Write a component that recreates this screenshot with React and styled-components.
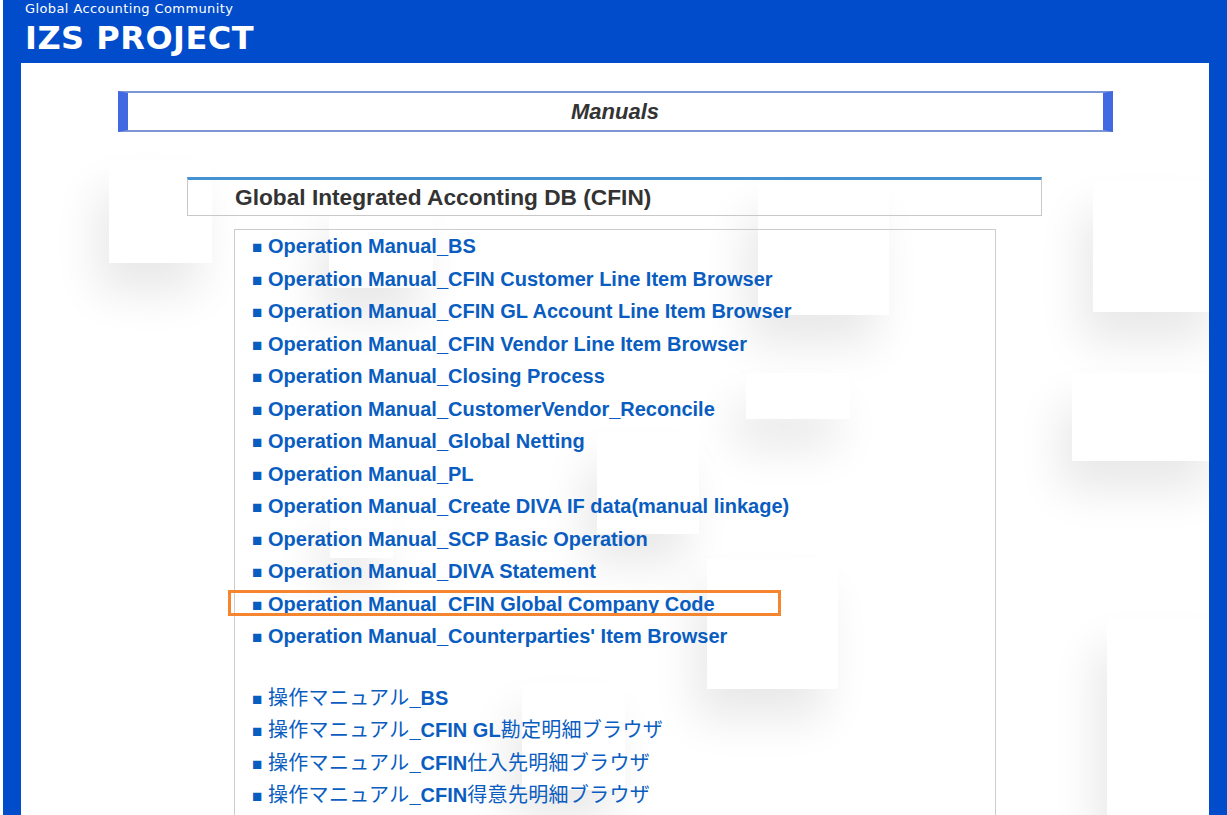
import React from 'react'
import styled, { createGlobalStyle } from 'styled-components'

const GlobalStyle = createGlobalStyle`
  html, body {
    margin: 0;
    padding: 0;
    overflow: hidden;
    background: #ffffff;
  }
  body {
    font-family: "Liberation Sans", Arial, sans-serif;
  }
`

// decorative white tiles with soft shadows behind the content (page coords)
const tiles = [
  [109, 160, 103, 103],
  [329, 203, 104, 85],
  [758, 183, 131, 132],
  [1093, 181, 130, 131],
  [746, 373, 104, 46],
  [1072, 373, 150, 88],
  [597, 433, 102, 101],
  [330, 507, 63, 51],
  [707, 559, 131, 130],
  [1107, 618, 120, 200],
  [522, 683, 103, 107],
]

const manuals = [
  'Operation Manual_BS',
  'Operation Manual_CFIN Customer Line Item Browser',
  'Operation Manual_CFIN GL Account Line Item Browser',
  'Operation Manual_CFIN Vendor Line Item Browser',
  'Operation Manual_Closing Process',
  'Operation Manual_CustomerVendor_Reconcile',
  'Operation Manual_Global Netting',
  'Operation Manual_PL',
  'Operation Manual_Create DIVA IF data(manual linkage)',
  'Operation Manual_SCP Basic Operation',
  'Operation Manual_DIVA Statement',
  'Operation Manual_CFIN Global Company Code',
  "Operation Manual_Counterparties' Item Browser",
]

const manualsJp = [
  '操作マニュアル_BS',
  '操作マニュアル_CFIN GL勘定明細ブラウザ',
  '操作マニュアル_CFIN仕入先明細ブラウザ',
  '操作マニュアル_CFIN得意先明細ブラウザ',
]

const CJK = /([\u3000-\u30ff\u4e00-\u9fff]+)/

function splitCjk(text) {
  return text.split(CJK).filter(Boolean).map((part, i) =>
    CJK.test(part) ? <Cjk key={i}>{part}</Cjk> : <span key={i}>{part}</span>
  )
}

function App() {
  return (
    <>
      <GlobalStyle />
      <Frame>
        <Header>
          <Tagline>Global Accounting Community</Tagline>
          <Brand>IZS PROJECT</Brand>
        </Header>
        <Content>
          <Backdrop>
            {tiles.map(([x, y, w, h], i) => (
              <Tile key={i} $x={x - 21} $y={y - 63} $w={w} $h={h} />
            ))}
          </Backdrop>
          <PageTitle>Manuals</PageTitle>
          <Section>
            <SectionTitle>Global Integrated Acconting DB (CFIN)</SectionTitle>
            <LinkList>
              {manuals.map((m, i) => (
                <LinkItem key={m} $highlight={i === 11}>
                  <Bullet>■</Bullet>
                  <a href="#">{m}</a>
                </LinkItem>
              ))}
              <Spacer />
              {manualsJp.map((m) => (
                <LinkItem key={m}>
                  <Bullet>■</Bullet>
                  <a href="#">{splitCjk(m)}</a>
                </LinkItem>
              ))}
            </LinkList>
          </Section>
        </Content>
      </Frame>
    </>
  )
}

const Frame = styled.div`
  margin-left: 3px;
  min-height: 100vh;
  padding: 0 18px;
  background: #004cca;
  display: flex;
  flex-direction: column;
`

const Header = styled.header`
  height: 63px;
  padding: 0 4px;
  box-sizing: border-box;
  color: #ffffff;
  font-family: "DejaVu Sans", Verdana, sans-serif;
`

const Tagline = styled.div`
  font-size: 13px;
  line-height: 18px;
  letter-spacing: 0.4px;
`

const Brand = styled.h1`
  margin: 0;
  font-size: 32px;
  line-height: 40px;
  font-weight: bold;
  letter-spacing: 0.5px;
`

const Content = styled.main`
  flex: 1;
  position: relative;
  overflow: hidden;
  background: #ffffff;
  padding-bottom: 300px;
`

const Backdrop = styled.div`
  position: absolute;
  inset: 0;
  z-index: 0;
  pointer-events: none;
`

const Tile = styled.div`
  position: absolute;
  left: ${(p) => p.$x}px;
  top: ${(p) => p.$y}px;
  width: ${(p) => p.$w}px;
  height: ${(p) => p.$h}px;
  background: #ffffff;
  box-shadow: -12px 30px 45px rgba(0, 0, 0, 0.09);
`

const PageTitle = styled.h2`
  position: relative;
  z-index: 1;
  box-sizing: border-box;
  width: 995px;
  height: 41px;
  margin: 28px auto 0;
  background: #ffffff;
  border-top: 2px solid #7d97d6;
  border-bottom: 2px solid #7d97d6;
  border-left: 10px solid #4169e1;
  border-right: 10px solid #4169e1;
  text-align: center;
  font-size: 22px;
  font-style: italic;
  font-weight: bold;
  line-height: 37px;
  color: #333333;
`

const Section = styled.section`
  position: relative;
  z-index: 1;
  width: 858px;
  margin: 45px auto 0;
`

const SectionTitle = styled.h3`
  margin: 0 2px 0 1px;
  box-sizing: border-box;
  height: 39px;
  padding-left: 47px;
  border: 1px solid #c8c8c8;
  border-top: 3px solid #4592d2;
  font-size: 22.7px;
  font-weight: bold;
  line-height: 35px;
  color: #333333;
`

const LinkList = styled.ul`
  list-style: none;
  margin: 13px 48px 0;
  padding: 0 0 300px 17px;
  border: 1px solid #cccccc;
`

const LinkItem = styled.li`
  position: relative;
  height: 32.5px;
  line-height: 32.5px;
  font-size: 20px;
  font-weight: bold;
  white-space: nowrap;
  a {
    color: #0a5dc0;
    text-decoration: none;
  }
  ${(p) =>
    p.$highlight &&
    `
    &::after {
      content: '';
      position: absolute;
      top: 2px;
      left: -24px;
      width: 553px;
      height: 26px;
      box-sizing: border-box;
      border: 3px solid #f5852e;
    }
  `}
`

const Bullet = styled.span`
  display: inline-block;
  width: 16px;
  font-size: 17px;
  color: #0a5dc0;
`

const Cjk = styled.span`
  font-family: "Noto Sans CJK JP", sans-serif;
  font-weight: 400;
  font-size: 20px;
  line-height: 1;
  letter-spacing: 0.3px;
`

const Spacer = styled.li`
  height: 29px;
`

export default App
